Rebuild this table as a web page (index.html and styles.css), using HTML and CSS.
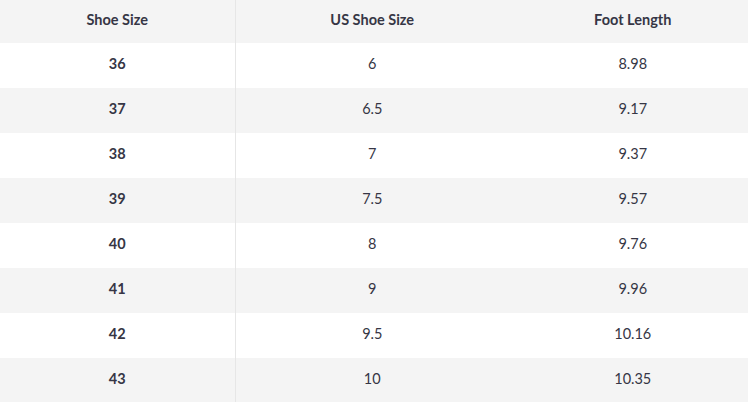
FILE: index.html
```html
<!DOCTYPE html>
<html>
<head>
<meta charset="utf-8">
<link rel="stylesheet" href="styles.css">
</head>
<body>
<div class="wrap">
<table class="sizes">
  <thead>
    <tr><th class="c1">Shoe Size</th><th class="c2">US Shoe Size</th><th class="c3">Foot Length</th></tr>
  </thead>
  <tbody>
    <tr><td class="c1">36</td><td>6</td><td>8.98</td></tr>
    <tr><td class="c1">37</td><td>6.5</td><td>9.17</td></tr>
    <tr><td class="c1">38</td><td>7</td><td>9.37</td></tr>
    <tr><td class="c1">39</td><td>7.5</td><td>9.57</td></tr>
    <tr><td class="c1">40</td><td>8</td><td>9.76</td></tr>
    <tr><td class="c1">41</td><td>9</td><td>9.96</td></tr>
    <tr><td class="c1">42</td><td>9.5</td><td>10.16</td></tr>
    <tr><td class="c1">43</td><td>10</td><td>10.35</td></tr>
  </tbody>
</table>
</div>
</body>
</html>
```
FILE: styles.css
```css
html, body { margin: 0; padding: 0; background: #fff; }
.wrap { width: 748px; height: 402px; overflow: hidden; }
.sizes {
  border-collapse: collapse;
  table-layout: fixed;
  width: 757px;
  font-family: Lato, "Open Sans", sans-serif;
  font-size: 14.5px;
  color: #363645;
}
.sizes th, .sizes td { text-align: center; padding: 0 0 4px 0; box-sizing: border-box; }
.sizes th { height: 43px; font-weight: 700; background: #f4f4f4; }
.sizes td { height: 45px; font-weight: 400; }
.sizes th.c1, .sizes td.c1 { width: 235px; border-right: 1px solid #e6e6e6; }
.sizes th.c2 { width: 274px; }
.sizes td.c1 { font-weight: 700; }
.sizes tbody tr:nth-child(even) { background: #f4f4f4; }
```
